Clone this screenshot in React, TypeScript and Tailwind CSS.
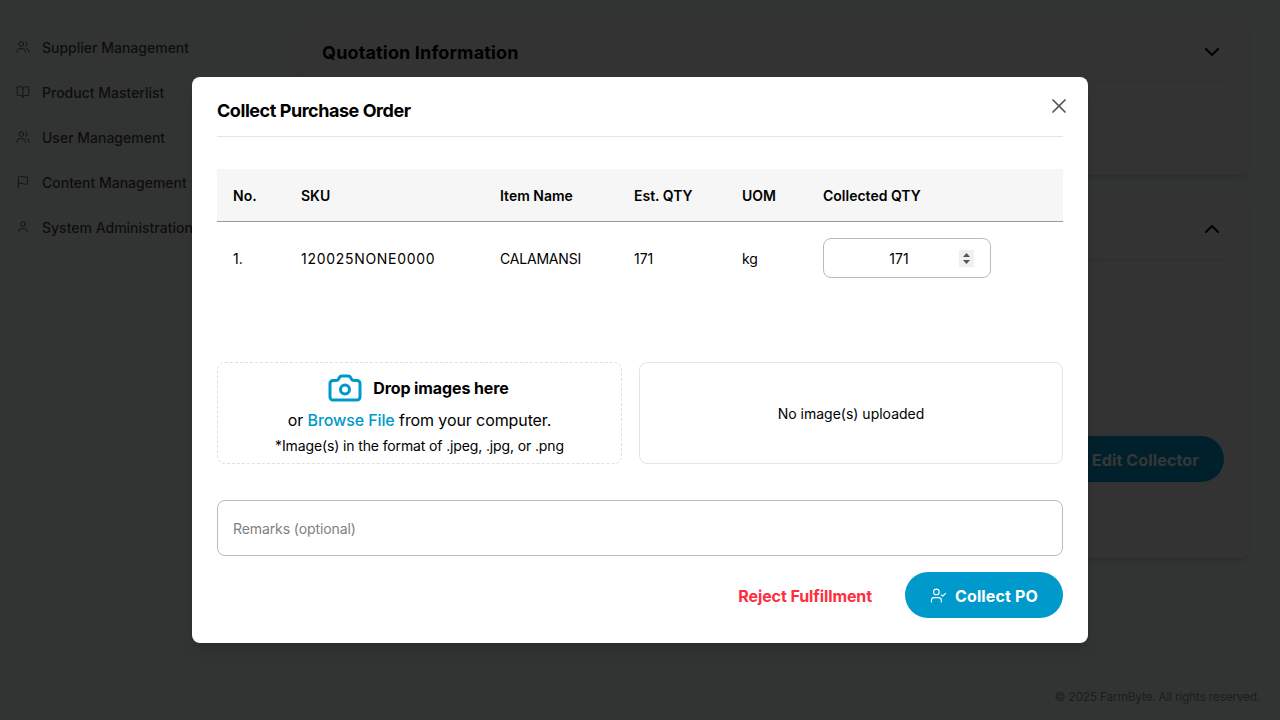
import { BookOpen, Camera, ChevronDown, ChevronUp, Flag, User, UserCheck, Users, X } from "lucide-react"

const font = "font-['Inter','Liberation_Sans',sans-serif]"

const navItems = [
    { label: "Supplier Management", Icon: Users },
    { label: "Product Masterlist", Icon: BookOpen },
    { label: "User Management", Icon: Users },
    { label: "Content Management", Icon: Flag },
    { label: "System Administration", Icon: User },
]

export default function App() {
    return (
        <div className={`relative flex flex-col w-[1280px] h-[720px] overflow-hidden bg-[#ecf5f0] ${font}`}>
            <div className="flex grow">
                {/* sidebar */}
                <div className="flex flex-col w-[298px] pt-9 pl-4 gap-[21px]">
                    {navItems.map(({ label, Icon }) => (
                        <div key={label} className="flex items-center gap-3 h-6 text-[#444444] text-sm font-medium whitespace-nowrap">
                            <Icon size={14} strokeWidth={1.5} className="mb-[2px]" />
                            <span>{label}</span>
                        </div>
                    ))}
                </div>

                {/* page content */}
                <div className="flex flex-col w-[950px] pt-[22px] gap-[23px]">
                    <div className="h-[153px] bg-[#f0f0f0] rounded-lg shadow-md px-6">
                        <div className="flex items-center justify-between h-[60px] border-b border-[#dddddd]">
                            <h2 className="pt-[2px] text-lg font-bold text-black tracking-[0.15px]">Quotation Information</h2>
                            <ChevronDown size={24} className="text-black" />
                        </div>
                    </div>
                    <div className="h-[360px] bg-[#f0f0f0] rounded-lg shadow-md px-6">
                        <div className="flex items-center justify-end h-[62px] border-b border-[#dddddd]">
                            <ChevronUp size={24} className="text-black" />
                        </div>
                        <div className="flex justify-end mt-[176px]">
                            <button type="button" className="h-[46px] pl-[160px] pr-[25px] pt-[2px] rounded-full bg-[#0099cc] text-white text-base font-bold tracking-[0.15px]">
                                Edit Collector
                            </button>
                        </div>
                    </div>
                </div>
            </div>
            <p className="pr-5 pb-[15px] text-right text-xs tracking-[-0.26px] text-[#888888]">© 2025 FarmByte. All rights reserved.</p>

            {/* dim layer and modal */}
            <div className="absolute inset-0 flex items-center justify-center bg-[#000000c9]">
                <div className="relative w-[896px] h-[566px] bg-white rounded-lg px-[25px] pt-5 shadow-lg">
                    <button type="button" className="absolute top-[17px] right-[17px] text-[#555555]">
                        <X size={24} strokeWidth={1.75} />
                    </button>
                    <h2 className="h-[40px] border-b border-[#e5e5e5] text-lg font-bold text-black tracking-[-0.45px]">
                        Collect Purchase Order
                    </h2>

                    <table className="mt-8 w-full table-fixed text-sm text-black">
                        <thead>
                            <tr className="h-[52px] bg-[#f6f6f6] border-b border-[#999999] text-left">
                                <th className="w-[68px] pl-4 pt-[2px] font-semibold">No.</th>
                                <th className="w-[199px] pl-4 pt-[2px] font-semibold">SKU</th>
                                <th className="w-[134px] pl-4 pt-[2px] font-semibold">Item Name</th>
                                <th className="w-[108px] pl-4 pt-[2px] font-semibold">Est. QTY</th>
                                <th className="w-[81px] pl-4 pt-[2px] font-semibold">UOM</th>
                                <th className="pl-4 pt-[2px] font-semibold">Collected QTY</th>
                            </tr>
                        </thead>
                        <tbody>
                            <tr className="h-[74px]">
                                <td className="pl-4 pt-[2px]">1.</td>
                                <td className="pl-4 pt-[2px] tracking-[0.7px]">120025NONE0000</td>
                                <td className="pl-4 pt-[2px] tracking-[-0.2px]">CALAMANSI</td>
                                <td className="pl-4 pt-[2px]">171</td>
                                <td className="pl-4 pt-[2px]">kg</td>
                                <td className="pl-4">
                                    <div className="relative w-[168px] h-10">
                                        <input
                                            type="number"
                                            defaultValue={171}
                                            className="w-full h-full pl-4 pr-8 pt-px text-center text-sm border border-[#bbbbbb] rounded-lg appearance-none [&::-webkit-inner-spin-button]:appearance-none"
                                        />
                                        {/* spinner */}
                                        <div className="absolute top-[12px] right-[17px] flex flex-col items-center justify-center gap-[3px] w-[15px] h-[17px] bg-[#f0f0f0]">
                                            <svg width="7" height="4" viewBox="0 0 7 4"><path d="M3.5 0 7 4H0z" fill="#555555" /></svg>
                                            <svg width="7" height="4" viewBox="0 0 7 4"><path d="M0 0h7L3.5 4z" fill="#555555" /></svg>
                                        </div>
                                    </div>
                                </td>
                            </tr>
                        </tbody>
                    </table>

                    {/* uploads */}
                    <div className="flex gap-[17px] mt-[67px] h-[102px]">
                        <div className="flex flex-col items-center justify-center w-[405px] border border-dashed border-[#e0e0e0] rounded-lg text-black">
                            <div className="flex items-center gap-2.5 h-[34px] pr-[3px]">
                                <Camera size={36} strokeWidth={2} className="text-[#0099cc]" />
                                <span className="text-base font-bold tracking-[-0.1px]">Drop images here</span>
                            </div>
                            <p className="mt-[3px] text-base leading-6 tracking-[-0.1px]">
                                or <span className="text-[#0099cc] font-medium">Browse File</span> from your computer.
                            </p>
                            <p className="mt-1 text-sm leading-5 tracking-[-0.13px]">*Image(s) in the format of .jpeg, .jpg, or .png</p>
                        </div>
                        <div className="flex items-center justify-center grow pt-px border border-[#e5e5e5] rounded-lg text-sm text-black">
                            No image(s) uploaded
                        </div>
                    </div>

                    <input
                        placeholder="Remarks (optional)"
                        className="block mt-9 w-full h-14 px-[15px] text-sm tracking-[-0.1px] border border-[#bbbbbb] rounded-lg placeholder:text-[#808080]"
                    />

                    {/* actions */}
                    <div className="flex items-center justify-end gap-[33px] mt-4">
                        <button type="button" className="pt-px text-base font-bold text-[#ff2d3d] tracking-[-0.09px]">Reject Fulfillment</button>
                        <button type="button" className="flex items-center justify-center gap-2 w-[158px] h-[46px] pt-px rounded-full bg-[#0099cc] text-white text-base font-bold tracking-[0.15px]">
                            <UserCheck size={17} strokeWidth={1.5} />
                            Collect PO
                        </button>
                    </div>
                </div>
            </div>
        </div>
    )
}
